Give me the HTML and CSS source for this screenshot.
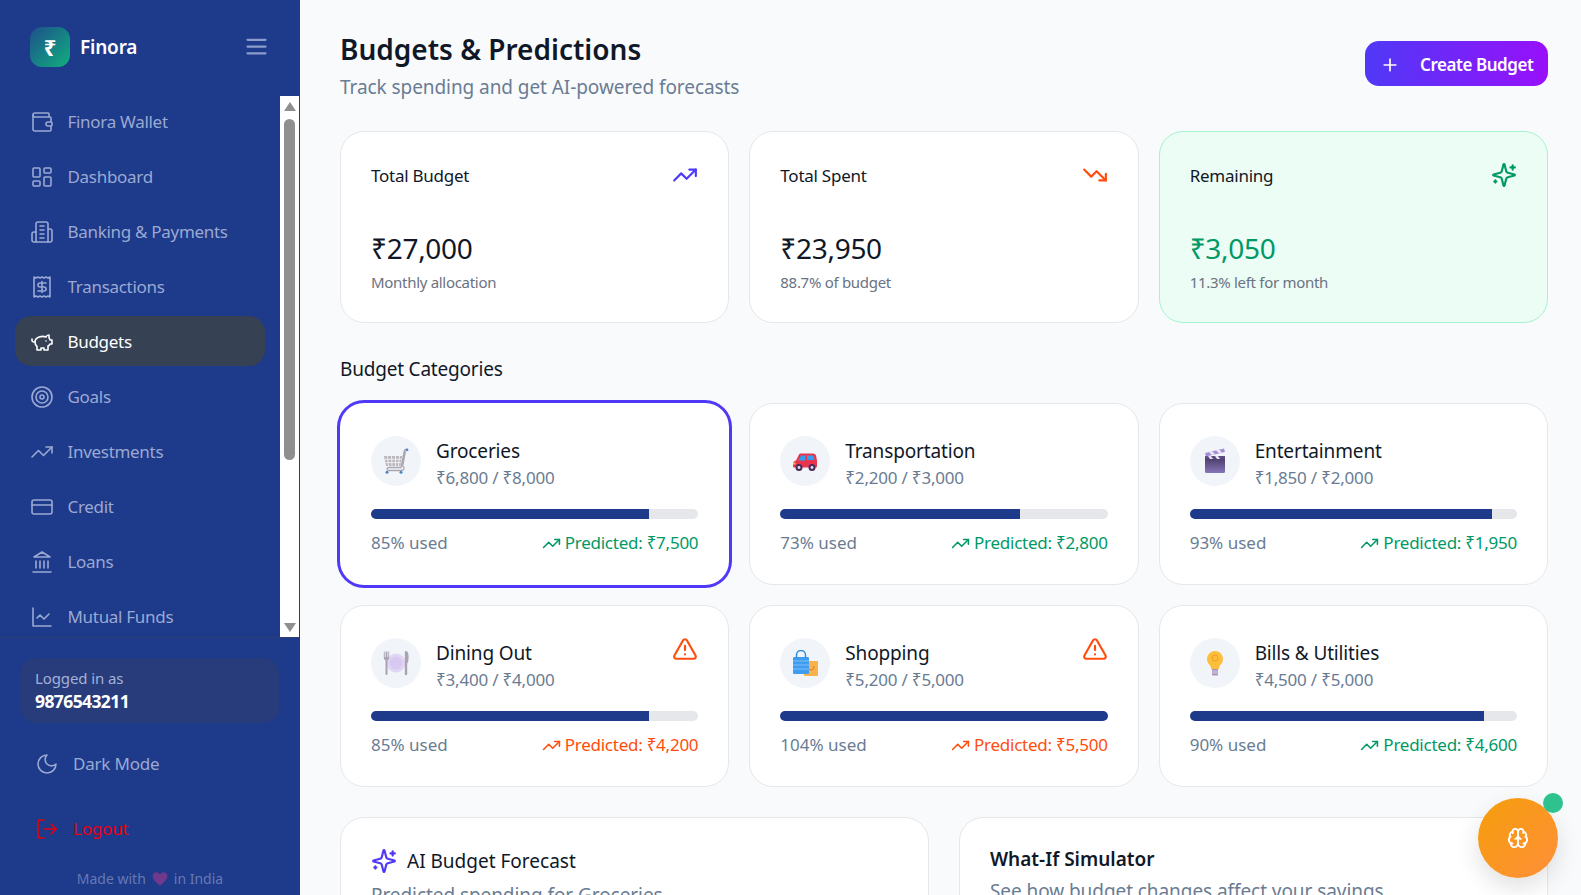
FILE: index.html
```html
<!DOCTYPE html>
<html lang="en">
<head>
  <meta charset="UTF-8">
  <meta name="viewport" content="width=device-width, initial-scale=1.0">
  <title>Finora - Budgets</title>
  <link rel="stylesheet" href="styles.css">
</head>
<body>
  <svg class="sprite" xmlns="http://www.w3.org/2000/svg">
    <symbol id="i-menu" viewBox="0 0 24 24"><path d="M4 6h16M4 12h16M4 18h16"/></symbol>
    <symbol id="i-wallet" viewBox="0 0 24 24"><path d="M19 7V4a1 1 0 0 0-1-1H5a2 2 0 0 0 0 4h15a1 1 0 0 1 1 1v4h-3a2 2 0 0 0 0 4h3a1 1 0 0 0 1-1v-2a1 1 0 0 0-1-1"/><path d="M3 5v14a2 2 0 0 0 2 2h15a1 1 0 0 0 1-1v-4"/></symbol>
    <symbol id="i-dashboard" viewBox="0 0 24 24"><rect x="3" y="3" width="7" height="9" rx="1"/><rect x="14" y="3" width="7" height="5" rx="1"/><rect x="14" y="12" width="7" height="9" rx="1"/><rect x="3" y="16" width="7" height="5" rx="1"/></symbol>
    <symbol id="i-bank" viewBox="0 0 24 24"><path d="M6 22V4a2 2 0 0 1 2-2h8a2 2 0 0 1 2 2v18Z"/><path d="M6 12H4a2 2 0 0 0-2 2v6a2 2 0 0 0 2 2h2"/><path d="M18 9h2a2 2 0 0 1 2 2v9a2 2 0 0 1-2 2h-2"/><path d="M10 6h4M10 10h4M10 14h4M10 18h4"/></symbol>
    <symbol id="i-receipt" viewBox="0 0 24 24"><path d="M4 2v20l2-1 2 1 2-1 2 1 2-1 2 1 2-1 2 1V2l-2 1-2-1-2 1-2-1-2 1-2-1-2 1Z"/><path d="M16 8h-6a2 2 0 1 0 0 4h4a2 2 0 1 1 0 4H8"/><path d="M12 17.500v-11"/></symbol>
    <symbol id="i-piggy" viewBox="0 0 24 24"><path d="M19 5c-1.500 0-2.800 1.400-3 2-3.500-1.500-11-.3-11 5 0 1.800 0 3 2 4.500V20h4v-2h3v2h4v-4c1-.5 1.700-1 2-2h2v-4h-2c0-1-.5-1.500-1-2V5z"/><path d="M2 9v1c0 1.100.9 2 2 2h1"/><path d="M16 11h.01"/></symbol>
    <symbol id="i-target" viewBox="0 0 24 24"><circle cx="12" cy="12" r="10"/><circle cx="12" cy="12" r="6"/><circle cx="12" cy="12" r="2"/></symbol>
    <symbol id="i-up" viewBox="0 0 24 24"><path d="M22 7l-8.500 8.500-5-5L2 17"/><path d="M16 7h6v6"/></symbol>
    <symbol id="i-down" viewBox="0 0 24 24"><path d="M22 17l-8.500-8.500-5 5L2 7"/><path d="M16 17h6v-6"/></symbol>
    <symbol id="i-card" viewBox="0 0 24 24"><rect x="2" y="5" width="20" height="14" rx="2"/><path d="M2 10h20"/></symbol>
    <symbol id="i-landmark" viewBox="0 0 24 24"><path d="M3 22h18M6 18v-7M10 18v-7M14 18v-7M18 18v-7"/><path d="M12 2l8 5H4z"/></symbol>
    <symbol id="i-chart" viewBox="0 0 24 24"><path d="M3 3v18h18"/><path d="M19 9l-5 5-4-4-3 3"/></symbol>
    <symbol id="i-moon" viewBox="0 0 24 24"><path d="M12 3a6 6 0 0 0 9 9 9 9 0 1 1-9-9Z"/></symbol>
    <symbol id="i-logout" viewBox="0 0 24 24"><path d="M9 21H5a2 2 0 0 1-2-2V5a2 2 0 0 1 2-2h4"/><path d="M16 17l5-5-5-5"/><path d="M21 12H9"/></symbol>
    <symbol id="i-plus" viewBox="0 0 24 24"><path d="M5 12h14M12 5v14"/></symbol>
    <symbol id="i-sparkles" viewBox="0 0 24 24"><path d="M9.937 15.500A2 2 0 0 0 8.500 14.063l-6.135-1.582a.5.5 0 0 1 0-.962L8.500 9.936A2 2 0 0 0 9.937 8.500l1.582-6.135a.5.5 0 0 1 .963 0L14.063 8.500A2 2 0 0 0 15.500 9.937l6.135 1.581a.5.5 0 0 1 0 .964L15.500 14.063a2 2 0 0 0-1.437 1.437l-1.582 6.135a.5.5 0 0 1-.963 0z"/><path d="M20 3v4M22 5h-4M4 17v2M5 18H3"/></symbol>
    <symbol id="i-alert" viewBox="0 0 24 24"><path d="M21.730 18l-8-14a2 2 0 0 0-3.480 0l-8 14A2 2 0 0 0 4 21h16a2 2 0 0 0 1.730-3"/><path d="M12 9v4M12 17h.01"/></symbol>
    <symbol id="i-brain" viewBox="0 0 24 24"><path d="M12 18V5"/><path d="M15 13a4.170 4.170 0 0 1-3-4 4.170 4.170 0 0 1-3 4"/><path d="M17.598 6.500A3 3 0 1 0 12 5a3 3 0 1 0-5.598 1.500"/><path d="M17.997 5.125a4 4 0 0 1 2.526 5.770"/><path d="M18 18a4 4 0 0 0 2-7.464"/><path d="M19.967 17.483A4 4 0 1 1 12 18a4 4 0 1 1-7.967-.517"/><path d="M6 18a4 4 0 0 1-2-7.464"/><path d="M6.003 5.125a4 4 0 0 0-2.526 5.770"/></symbol>
  </svg>

  <div class="app">
    <aside class="sidebar">
      <div class="brand">
        <div class="brand-logo">₹</div>
        <span class="brand-name">Finora</span>
        <svg class="menu-btn"><use href="#i-menu"/></svg>
      </div>

      <div class="nav-wrap">
        <nav class="nav">
          <a class="nav-item" href="#"><svg class="icon"><use href="#i-wallet"/></svg>Finora Wallet</a>
          <a class="nav-item" href="#"><svg class="icon"><use href="#i-dashboard"/></svg>Dashboard</a>
          <a class="nav-item" href="#"><svg class="icon"><use href="#i-bank"/></svg>Banking &amp; Payments</a>
          <a class="nav-item" href="#"><svg class="icon"><use href="#i-receipt"/></svg>Transactions</a>
          <a class="nav-item active" href="#"><svg class="icon"><use href="#i-piggy"/></svg>Budgets</a>
          <a class="nav-item" href="#"><svg class="icon"><use href="#i-target"/></svg>Goals</a>
          <a class="nav-item" href="#"><svg class="icon"><use href="#i-up"/></svg>Investments</a>
          <a class="nav-item" href="#"><svg class="icon"><use href="#i-card"/></svg>Credit</a>
          <a class="nav-item" href="#"><svg class="icon"><use href="#i-landmark"/></svg>Loans</a>
          <a class="nav-item" href="#"><svg class="icon"><use href="#i-chart"/></svg>Mutual Funds</a>
        </nav>
        <div class="scrollbar">
          <span class="arrow-up"></span>
          <div class="scroll-rail"><div class="scroll-thumb"></div></div>
          <span class="arrow-down"></span>
        </div>
      </div>

      <div class="side-foot">
        <div class="user-box">
          <div class="user-label">Logged in as</div>
          <div class="user-phone">9876543211</div>
        </div>
        <a class="foot-link" href="#"><svg class="icon"><use href="#i-moon"/></svg>Dark Mode</a>
        <a class="foot-link logout" href="#"><svg class="icon"><use href="#i-logout"/></svg>Logout</a>
        <div class="made-with">Made with
          <svg class="heart" viewBox="0 0 24 24"><path d="M12 22C5 16 1 12.500 1 7.800 1 4.200 3.700 2 6.600 2 8.800 2 10.800 3.200 12 5.200 13.200 3.200 15.200 2 17.400 2 20.300 2 23 4.200 23 7.800 23 12.500 19 16 12 22Z"/></svg>
          in India</div>
      </div>
    </aside>

    <main class="main">
      <header class="page-head">
        <div>
          <h1>Budgets &amp; Predictions</h1>
          <p class="page-sub">Track spending and get AI-powered forecasts</p>
        </div>
        <button class="create-btn"><svg class="plus"><use href="#i-plus"/></svg>Create Budget</button>
      </header>

      <section class="stats">
        <div class="stat-card">
          <div class="stat-head"><span>Total Budget</span><svg class="stat-icon indigo"><use href="#i-up"/></svg></div>
          <div class="stat-value">₹27,000</div>
          <div class="stat-note">Monthly allocation</div>
        </div>
        <div class="stat-card">
          <div class="stat-head"><span>Total Spent</span><svg class="stat-icon orange"><use href="#i-down"/></svg></div>
          <div class="stat-value">₹23,950</div>
          <div class="stat-note">88.7% of budget</div>
        </div>
        <div class="stat-card remaining">
          <div class="stat-head"><span>Remaining</span><svg class="stat-icon green"><use href="#i-sparkles"/></svg></div>
          <div class="stat-value green">₹3,050</div>
          <div class="stat-note">11.3% left for month</div>
        </div>
      </section>

      <h2 class="section-title">Budget Categories</h2>

      <section class="categories">
        <div class="cat-card selected">
          <div class="cat-head">
            <div class="cat-icon">
              <svg class="emoji" viewBox="0 0 26 26">
                <path d="M1 8h18l-1.500 10H3z" fill="#b9b6bd"/>
                <path d="M4.500 8l1 10M8.500 8l.5 10M12.500 8v10M16.500 8l-1 10M2 11.300h16.500M2.500 14.600h15.500" stroke="#f4f3f5" stroke-width=".9" fill="none"/>
                <path d="M24 1l-2.500 1-3.500 17.500H5.500a1.500 1.500 0 0 0 0 3H19a2.500 2.500 0 0 0 2-2.500c0-1-.6-1.700-1.300-2L22.500 3" stroke="#aaa6b0" stroke-width="1.300" fill="none"/>
                <circle cx="24" cy="1.800" r="1.400" fill="#4a86c8"/>
                <circle cx="4" cy="24.300" r="1.500" fill="#4a86c8"/><circle cx="18" cy="24.300" r="1.500" fill="#4a86c8"/>
              </svg>
            </div>
            <div>
              <div class="cat-name">Groceries</div>
              <div class="cat-amount">₹6,800 / ₹8,000</div>
            </div>
          </div>
          <div class="bar"><div class="bar-fill" style="width:85%"></div></div>
          <div class="cat-foot"><span>85% used</span><span class="predict ok"><svg><use href="#i-up"/></svg>Predicted: ₹7,500</span></div>
        </div>

        <div class="cat-card">
          <div class="cat-head">
            <div class="cat-icon">
              <svg class="emoji" viewBox="0 0 26 26">
                <path d="M1 16c0-2 1-3 3-3.500L7 6.500C7.400 5.800 8 5.500 9 5.500h12c1.500 0 2.500.8 3 2l1 5v5.500c0 1-.5 1.500-1.500 1.500h-21C1.500 19.500 1 19 1 18z" fill="#e8344e"/>
                <path d="M9 7.500h4.500v5H6.500zM15 7.500h5.500c.7 0 1 .4 1.200 1l.8 3.500H15z" fill="#2f9fef"/>
                <circle cx="7" cy="19.500" r="3.500" fill="#4b2b57"/><circle cx="7" cy="19.500" r="1.400" fill="#e6dfe8"/>
                <circle cx="20" cy="19.500" r="3.500" fill="#4b2b57"/><circle cx="20" cy="19.500" r="1.400" fill="#e6dfe8"/>
                <rect x="1" y="14.500" width="2.500" height="2" fill="#f5b83c"/>
              </svg>
            </div>
            <div>
              <div class="cat-name">Transportation</div>
              <div class="cat-amount">₹2,200 / ₹3,000</div>
            </div>
          </div>
          <div class="bar"><div class="bar-fill" style="width:73.300%"></div></div>
          <div class="cat-foot"><span>73% used</span><span class="predict ok"><svg><use href="#i-up"/></svg>Predicted: ₹2,800</span></div>
        </div>

        <div class="cat-card">
          <div class="cat-head">
            <div class="cat-icon">
              <svg class="emoji" viewBox="0 0 26 26">
                <defs><linearGradient id="clap" x1="0" y1="0" x2="0" y2="1"><stop offset="0" stop-color="#43355e"/><stop offset="1" stop-color="#8576b8"/></linearGradient></defs>
                <rect x="3" y="8" width="20" height="17" rx="1.500" fill="url(#clap)"/>
                <path d="M3 8h20v3H3z" fill="#5c4b80"/>
                <path d="M6 8l2 3h3L9 8zM13 8l2 3h3l-2-3z" fill="#e6e0f2"/>
                <path d="M3 5l19-4.500 1 3.500L4 8.500z" fill="#a48fd6"/>
                <path d="M7 4l3 3 3-.7-3-3zM14 2.300l3 3 3-.7-3-3z" fill="#efeaf8"/>
              </svg>
            </div>
            <div>
              <div class="cat-name">Entertainment</div>
              <div class="cat-amount">₹1,850 / ₹2,000</div>
            </div>
          </div>
          <div class="bar"><div class="bar-fill" style="width:92.500%"></div></div>
          <div class="cat-foot"><span>93% used</span><span class="predict ok"><svg><use href="#i-up"/></svg>Predicted: ₹1,950</span></div>
        </div>

        <div class="cat-card">
          <div class="cat-head">
            <div class="cat-icon">
              <svg class="emoji" viewBox="0 0 26 26">
                <circle cx="13" cy="13" r="9.500" fill="#e2d6f5"/><circle cx="13" cy="13" r="6.500" fill="#d8c9f1"/>
                <path d="M.8 1.500v6c0 1.500.7 2.500 1.700 2.800V24a1 1 0 0 0 2 0V10.300c1-.3 1.700-1.300 1.700-2.800v-6h-.9v5.500h-.9V1.500h-1.800v5.500h-.9V1.500z" fill="#aaa3b4"/>
                <path d="M23 1c1.700 0 2.600 2 2.600 6 0 4-.8 6-1.400 6.500V24a1.200 1.200 0 0 1-2.400 0V2c0-.6.600-1 1.200-1z" fill="#aaa3b4"/>
              </svg>
            </div>
            <div>
              <div class="cat-name">Dining Out</div>
              <div class="cat-amount">₹3,400 / ₹4,000</div>
            </div>
            <svg class="cat-alert"><use href="#i-alert"/></svg>
          </div>
          <div class="bar"><div class="bar-fill" style="width:85%"></div></div>
          <div class="cat-foot"><span>85% used</span><span class="predict warn"><svg><use href="#i-up"/></svg>Predicted: ₹4,200</span></div>
        </div>

        <div class="cat-card">
          <div class="cat-head">
            <div class="cat-icon">
              <svg class="emoji" viewBox="0 0 26 26">
                <rect x="12" y="11" width="14" height="15" rx=".8" fill="#f7b24a"/>
                <path d="M16 16c0 3 1.500 4 3 4s3-1 3-4" stroke="#e3762c" stroke-width="1" fill="none"/>
                <rect x="1" y="7" width="16" height="17" rx="1" fill="#3f9df0"/>
                <path d="M1 11h16M1 15h16M1 19h16" stroke="#7cc0f7" stroke-width="1.200"/>
                <path d="M4.500 8V5a4.500 4.500 0 0 1 9 0v3" stroke="#2f8fe0" stroke-width="1.500" fill="none"/>
              </svg>
            </div>
            <div>
              <div class="cat-name">Shopping</div>
              <div class="cat-amount">₹5,200 / ₹5,000</div>
            </div>
            <svg class="cat-alert"><use href="#i-alert"/></svg>
          </div>
          <div class="bar"><div class="bar-fill" style="width:100%"></div></div>
          <div class="cat-foot"><span>104% used</span><span class="predict warn"><svg><use href="#i-up"/></svg>Predicted: ₹5,500</span></div>
        </div>

        <div class="cat-card">
          <div class="cat-head">
            <div class="cat-icon">
              <svg class="emoji" viewBox="0 0 26 26">
                <path d="M13 1a8 8 0 0 0-8 8c0 3 1.500 4.700 2.800 6.300.9 1.100 1.200 2.200 1.200 3.700h8c0-1.500.3-2.600 1.200-3.700C19.500 13.700 21 12 21 9a8 8 0 0 0-8-8z" fill="#fbbf3c"/>
                <circle cx="13" cy="8" r="3" fill="none" stroke="#f59a23" stroke-width="1"/>
                <path d="M10 19h6v5.500a1 1 0 0 1-1 1h-4a1 1 0 0 1-1-1z" fill="#a793b8"/>
                <path d="M9.500 21h7M9.500 23h7" stroke="#e6deee" stroke-width=".8"/>
              </svg>
            </div>
            <div>
              <div class="cat-name">Bills &amp; Utilities</div>
              <div class="cat-amount">₹4,500 / ₹5,000</div>
            </div>
          </div>
          <div class="bar"><div class="bar-fill" style="width:90%"></div></div>
          <div class="cat-foot"><span>90% used</span><span class="predict ok"><svg><use href="#i-up"/></svg>Predicted: ₹4,600</span></div>
        </div>
      </section>

      <section class="panels">
        <div class="panel">
          <div class="panel-title"><svg><use href="#i-sparkles"/></svg>AI Budget Forecast</div>
          <p class="panel-sub">Predicted spending for Groceries</p>
        </div>
        <div class="panel">
          <div class="panel-title strong">What-If Simulator</div>
          <p class="panel-sub tight">See how budget changes affect your savings</p>
        </div>
      </section>
    </main>
  </div>

  <button class="fab">
    <svg><use href="#i-brain"/></svg>
    <span class="fab-dot"></span>
  </button>
</body>
</html>
```

FILE: styles.css
```css
* {
  box-sizing: border-box;
}

html, body {
  margin: 0;
  padding: 0;
  height: 100%;
  overflow: hidden;
}

body {
  font-family: 'Noto Sans', 'Open Sans', sans-serif;
  color: #101828;
  background-color: #f9fafb;
}

a {
  text-decoration: none;
  color: inherit;
}

svg use {
  fill: none;
  stroke: currentColor;
}

.sprite {
  display: none;
}

symbol {
  fill: none;
  stroke-linecap: round;
  stroke-linejoin: round;
}

.app {
  display: flex;
  height: 895px;
}

/* sidebar */
.sidebar {
  width: 300px;
  flex-shrink: 0;
  display: flex;
  flex-direction: column;
  background-color: #1e3a8a;
  overflow: hidden;
}

.brand {
  height: 96px;
  flex-shrink: 0;
  display: flex;
  align-items: center;
  padding: 0 30px 2px;
}

.brand-logo {
  width: 40px;
  height: 40px;
  border-radius: 12px;
  display: flex;
  align-items: center;
  justify-content: center;
  background: linear-gradient(135deg, #1e4f8a, #10b07f);
  color: white;
  font-size: 22px;
  font-weight: 700;
}

.brand-name {
  margin-left: 10px;
  color: white;
  font-size: 19px;
  font-weight: 600;
  letter-spacing: -0.2px;
}

.menu-btn {
  width: 27px;
  height: 27px;
  margin-left: auto;
  margin-top: -2px;
  color: #8c9dcd;
  stroke-width: 2;
}

.nav-wrap {
  height: 541px;
  flex-shrink: 0;
  display: flex;
}

.nav {
  flex: 1;
  display: flex;
  flex-direction: column;
  gap: 5px;
  overflow: hidden;
}

.nav-item {
  height: 50px;
  flex-shrink: 0;
  margin: 0 15px;
  padding: 1px 15px 0;
  display: flex;
  align-items: center;
  gap: 13.500px;
  border-radius: 16px;
  color: #9aa9d3;
  font-size: 17px;
  letter-spacing: -0.3px;
}

.nav-item.active {
  background-color: #364153;
  color: white;
}

.icon {
  width: 24px;
  height: 24px;
  flex-shrink: 0;
  stroke-width: 1.6;
}

.scrollbar {
  width: 19px;
  margin-right: 1px;
  background-color: white;
  display: flex;
  flex-direction: column;
  align-items: center;
  padding: 6px 0 5px;
}

.arrow-up, .arrow-down {
  width: 0;
  height: 0;
  border-left: 6.500px solid transparent;
  border-right: 6.500px solid transparent;
}

.arrow-up {
  border-bottom: 9px solid #8f8f8f;
}

.arrow-down {
  border-top: 9px solid #8f8f8f;
}

.scroll-rail {
  flex: 1;
  width: 11px;
  padding-top: 8px;
}

.scroll-thumb {
  height: 341px;
  border-radius: 6px;
  background-color: #8f8f8f;
}

.side-foot {
  flex: 1;
  border-top: 1px solid #2d3f72;
  padding: 20px 20px 0;
}

.user-box {
  width: 259px;
  height: 65px;
  padding: 9px 15px;
  border-radius: 16px;
  background-color: #283b7a;
}

.user-label {
  color: #a3b1d8;
  font-size: 15px;
  line-height: 22px;
  letter-spacing: -0.1px;
}

.user-phone {
  color: white;
  font-size: 17.500px;
  font-weight: 700;
  line-height: 24px;
  letter-spacing: -0.6px;
}

.foot-link {
  height: 65px;
  padding-left: 15px;
  display: flex;
  align-items: center;
  gap: 14px;
  color: #9aa9d3;
  font-size: 17px;
  letter-spacing: -0.2px;
}

.user-box + .foot-link {
  margin-top: 8px;
}

.logout {
  color: #e7000b;
}

.made-with {
  margin-top: 8px;
  display: flex;
  align-items: center;
  justify-content: center;
  gap: 6px;
  color: #6579b5;
  font-size: 14px;
  line-height: 20px;
}

.heart {
  width: 16px;
  height: 16px;
  fill: #6f3a8e;
}

/* main content */
.main {
  flex: 1;
  padding: 30px 33px 0 40px;
  overflow: hidden;
}

.page-head {
  display: flex;
  justify-content: space-between;
  align-items: flex-start;
  margin-bottom: 30px;
}

h1 {
  margin: -1px 0 0;
  font-size: 28px;
  font-weight: 600;
  line-height: 40px;
  color: #101828;
}

.page-sub {
  margin: 5px 0 0;
  font-size: 19px;
  line-height: 27px;
  letter-spacing: -0.07px;
  color: #6a7c93;
}

.create-btn {
  width: 183px;
  height: 45px;
  margin-top: 11px;
  border: none;
  border-radius: 14px;
  padding: 2px 0 0 15px;
  display: flex;
  align-items: center;
  gap: 20px;
  background: linear-gradient(90deg, #4f39f6, #9810fa);
  color: white;
  font-family: inherit;
  font-size: 17px;
  font-weight: 600;
  letter-spacing: -0.45px;
}

.plus {
  width: 20px;
  height: 20px;
  flex-shrink: 0;
  stroke-width: 2;
}

.stats {
  display: grid;
  grid-template-columns: repeat(3, 1fr);
  gap: 20px;
}

.stat-card {
  height: 192px;
  padding: 30px;
  border: 1px solid #e5e7eb;
  border-radius: 24px;
  background-color: white;
}

.stat-card.remaining {
  background-color: #ecfdf5;
  border-color: #a4f4cf;
}

.stat-head {
  height: 28px;
  display: flex;
  justify-content: space-between;
  align-items: flex-start;
  font-size: 17px;
  line-height: 28px;
  letter-spacing: -0.25px;
}

.stat-icon {
  width: 26px;
  height: 26px;
  stroke-width: 2;
}

.indigo {
  color: #4f39f6;
}

.orange {
  color: #ff4d0d;
}

.green {
  color: #009966;
}

.stat-value {
  margin-top: 38px;
  font-size: 28px;
  line-height: 40px;
  letter-spacing: -0.3px;
}

.stat-note {
  margin-top: 4px;
  font-size: 15px;
  line-height: 20px;
  letter-spacing: -0.3px;
  color: #6a7282;
}

.section-title {
  margin: 32px 0 20px;
  font-size: 19px;
  font-weight: 400;
  line-height: 28px;
  letter-spacing: -0.2px;
}

.categories {
  display: grid;
  grid-template-columns: repeat(3, 1fr);
  gap: 20px;
}

.cat-card {
  height: 182px;
  padding: 32px 30px 0;
  border: 1px solid #e5e7eb;
  border-radius: 24px;
  background-color: white;
}

.cat-card.selected {
  border-color: transparent;
  box-shadow: 0 0 0 3px #4f39f6;
}

.cat-head {
  height: 50px;
  display: flex;
  align-items: flex-start;
  gap: 15px;
}

.cat-icon {
  width: 50px;
  height: 50px;
  flex-shrink: 0;
  border-radius: 50%;
  display: flex;
  align-items: center;
  justify-content: center;
  background-color: #f1f5f9;
}

.emoji {
  width: 26px;
  height: 26px;
}

.cat-name {
  margin-top: 2px;
  font-size: 19px;
  line-height: 26px;
  letter-spacing: -0.15px;
}

.cat-amount {
  font-size: 17px;
  line-height: 24px;
  margin-top: 2px;
  letter-spacing: -0.2px;
  color: #6a7c93;
}

.cat-alert {
  width: 26px;
  height: 26px;
  margin-left: auto;
  margin-top: -2px;
  color: #ff4d0d;
  stroke-width: 2;
}

.bar {
  height: 10px;
  margin-top: 23px;
  border-radius: 5px;
  background-color: #e5e7eb;
  overflow: hidden;
}

.bar-fill {
  height: 100%;
  background-color: #1e3a8a;
}

.cat-foot {
  margin-top: 12px;
  display: flex;
  justify-content: space-between;
  font-size: 17px;
  line-height: 24px;
  color: #6a7c93;
}

.predict {
  display: flex;
  align-items: center;
  gap: 4px;
  letter-spacing: -0.25px;
}

.predict svg {
  width: 19px;
  height: 19px;
  stroke-width: 2;
}

.ok {
  color: #009966;
}

.warn {
  color: #ff4d0d;
}

.panels {
  display: grid;
  grid-template-columns: repeat(2, 1fr);
  gap: 30px;
  margin-top: 30px;
}

.panel {
  height: 300px;
  padding: 30px;
  border: 1px solid #e5e7eb;
  border-radius: 24px;
  background-color: white;
}

.panel-title {
  display: flex;
  align-items: center;
  gap: 10px;
  font-size: 19px;
  line-height: 26px;
}

.panel-title svg {
  width: 26px;
  height: 26px;
  color: #4f39f6;
  stroke-width: 2;
}

.panel-title.strong {
  font-weight: 600;
  line-height: 22px;
}

.panel-sub {
  margin: 8px 0 0;
  font-size: 19px;
  line-height: 26px;
  letter-spacing: -0.07px;
  color: #6a7c93;
}

.fab {
  position: fixed;
  right: 23px;
  bottom: 17px;
  width: 80px;
  height: 80px;
  border: none;
  border-radius: 50%;
  display: flex;
  align-items: center;
  justify-content: center;
  background: linear-gradient(135deg, #f59e0b, #ff8f3a);
  color: white;
  box-shadow: 0 10px 25px rgba(0, 0, 0, 0.12);
}

.fab svg {
  width: 22px;
  height: 22px;
  stroke-width: 2;
}

.fab-dot {
  position: absolute;
  top: -5px;
  right: -5px;
  width: 20px;
  height: 20px;
  border-radius: 50%;
  background-color: #2ec28e;
}
```
